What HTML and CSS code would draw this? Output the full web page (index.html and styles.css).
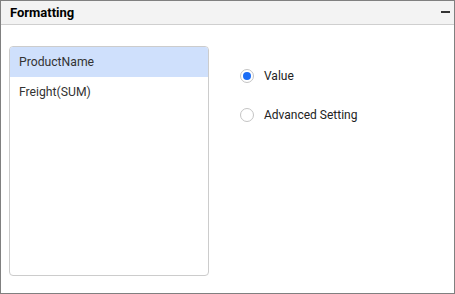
FILE: index.html
```html
<!DOCTYPE html>
<html>
<head>
<meta charset="utf-8">
<link rel="stylesheet" href="styles.css">
</head>
<body>
<div class="panel">
  <div class="header">
    <span class="title">Formatting</span>
    <span class="collapse"></span>
  </div>
  <div class="content">
    <div class="list">
      <div class="item selected">ProductName</div>
      <div class="item">Freight(SUM)</div>
    </div>
    <div class="options">
      <label class="radio-row"><span class="radio checked"></span><span class="label">Value</span></label>
      <label class="radio-row"><span class="radio"></span><span class="label">Advanced Setting</span></label>
    </div>
  </div>
</div>
</body>
</html>
```
FILE: styles.css
```css
html, body { margin: 0; padding: 0; background: #fff; }
body { font-family: Roboto, "Liberation Sans", sans-serif; color: #333; }
.panel {
  width: 455px; height: 294px; box-sizing: border-box;
  border: 1px solid #808080;
  display: flex; flex-direction: column;
}
.header {
  height: 23px; background: #f3f3f3; border-bottom: 1px solid #cfcfcf;
  display: flex; align-items: center; justify-content: space-between;
  padding: 0 4px 0 9px;
}
.title { font-weight: bold; font-size: 13px; color: #000; }
.collapse { width: 9px; height: 2px; background: #333; margin-top: -2px; }
.content { display: flex; padding: 21px 0 0 8px; }
.list {
  width: 200px; height: 230px; box-sizing: border-box;
  border: 1px solid #cccccc; border-radius: 4px; overflow: hidden;
}
.item { height: 30px; line-height: 30px; padding-left: 9px; font-size: 12.2px; color: #333; }
.item.selected { background: #cfe0fc; }
.options { display: flex; flex-direction: column; padding: 23px 0 0 31px; gap: 25px; }
.radio-row { display: flex; align-items: center; height: 14px; }
.radio {
  width: 14px; height: 14px; box-sizing: border-box;
  border: 1px solid #c4c4c4; border-radius: 50%; background: #fff;
  display: flex; align-items: center; justify-content: center;
}
.radio.checked::after { content: ""; width: 8px; height: 8px; border-radius: 50%; background: #1a6cf5; }
.label { margin-left: 10px; font-size: 12px; color: #222; }
```
